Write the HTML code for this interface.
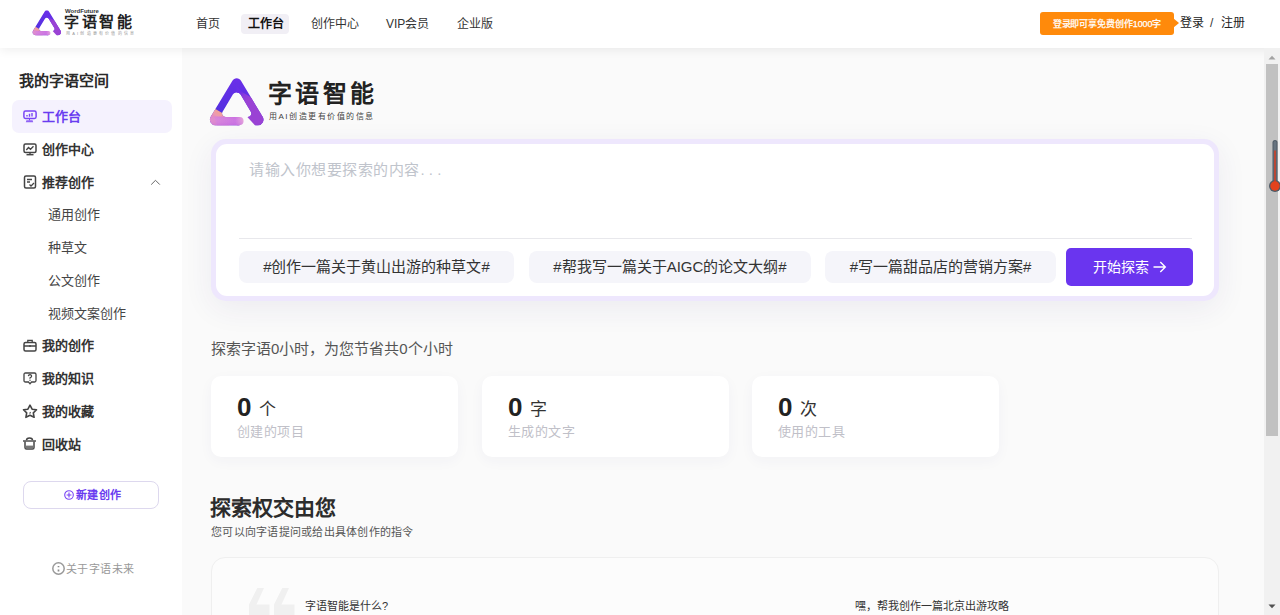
<!DOCTYPE html>
<html lang="zh-CN"><head><meta charset="utf-8">
<style>
*{margin:0;padding:0;box-sizing:border-box}
html,body{width:1280px;height:615px;overflow:hidden;background:#fafafa;font-family:"Liberation Sans",sans-serif;color:#333}
.abs{position:absolute}
#header{position:absolute;left:0;top:0;width:1280px;height:48px;background:#fff;z-index:5;box-shadow:0 2px 10px rgba(0,0,0,0.07)}
#side{position:absolute;left:0;top:48px;width:182px;height:567px;background:#fff;z-index:2}
.nav{position:absolute;top:14px;height:20px;line-height:20px;font-size:12px;color:#333;white-space:nowrap}
.nav.act{background:#f1eff5;border-radius:4px;font-weight:bold;color:#111;padding:0 0 0 7px;width:48px}
.mi{position:absolute;left:12px;width:159px;height:33px;line-height:33px;font-size:13px;font-weight:bold;color:#333;white-space:nowrap}
.mi .ic{position:absolute;left:11px;top:10px}
.mi .tx{position:absolute;left:30px;top:0}
.mi.act{background:#f5f2fe;border-radius:7px;color:#6a3cf0;width:160px}
.sub{position:absolute;left:48px;height:33px;line-height:33px;font-size:13px;color:#444;white-space:nowrap}
.tag{position:absolute;top:251px;height:32px;background:#f5f5fa;border-radius:8px;font-size:15px;line-height:32px;text-align:center;color:#333;white-space:nowrap}
.card{position:absolute;top:376px;width:247px;height:81px;background:#fff;border-radius:10px;box-shadow:0 4px 14px rgba(60,40,120,0.04)}
.card .num{position:absolute;left:26px;top:16px;font-size:26px;font-weight:bold;color:#222;line-height:30px}
.card .unit{position:absolute;left:48px;top:22px;font-size:17px;color:#333;line-height:24px}
.card .lbl{position:absolute;left:26px;top:47px;letter-spacing:0.4px;font-size:13px;color:#c0c0c8;line-height:18px;white-space:nowrap}
#scroll{position:absolute;left:1264px;top:48px;width:16px;height:567px;background:#f1f1f1;z-index:6}
</style></head><body>
<svg width="0" height="0" style="position:absolute">
<defs>
  <linearGradient id="lgV" gradientUnits="userSpaceOnUse" x1="0" y1="5" x2="0" y2="40"><stop offset="0" stop-color="#6c2ee9"/><stop offset="1" stop-color="#5331e0"/></linearGradient>
  <linearGradient id="lgS" gradientUnits="userSpaceOnUse" x1="17" y1="35" x2="8" y2="46"><stop offset="0" stop-color="#4e2fd8"/><stop offset="0.22" stop-color="#f3a58a"/><stop offset="0.7" stop-color="#ec9ab0"/><stop offset="1" stop-color="#de84c8"/></linearGradient>
  <linearGradient id="lgB" gradientUnits="userSpaceOnUse" x1="4" y1="0" x2="39" y2="0"><stop offset="0" stop-color="#dd86cc"/><stop offset="0.3" stop-color="#d47ad8"/><stop offset="0.75" stop-color="#c96be0"/><stop offset="1" stop-color="#e7a3d6"/></linearGradient>
  <linearGradient id="lgBv" gradientUnits="userSpaceOnUse" x1="0" y1="44" x2="0" y2="54"><stop offset="0" stop-color="#ffffff" stop-opacity="0"/><stop offset="1" stop-color="#b860e0" stop-opacity="0.35"/></linearGradient>
  <linearGradient id="lgR" gradientUnits="userSpaceOnUse" x1="36" y1="19" x2="43" y2="28"><stop offset="0" stop-color="#6a2ee8"/><stop offset="0.45" stop-color="#8a3bdc"/><stop offset="1" stop-color="#9a42d4"/></linearGradient>
  <clipPath id="lgClip"><path clip-rule="evenodd" d="M27.41 8.74 A5.00 5.00 0 0 1 35.99 8.74 L57.67 44.87 A5.50 5.50 0 0 1 52.95 53.20 L10.45 53.20 A5.50 5.50 0 0 1 5.73 44.87 Z M27.84 22.62 A4.50 4.50 0 0 1 35.56 22.62 L45.81 39.70 A3.50 3.50 0 0 1 42.81 45.00 L20.59 45.00 A3.50 3.50 0 0 1 17.59 39.70 Z"/></clipPath>
  <mask id="lgMask" maskUnits="userSpaceOnUse" x="0" y="0" width="64" height="60"><rect width="64" height="60" fill="#fff"/><path d="M34.5 43.5H41L51.5 55H34.5Z" fill="#000"/><circle cx="34.5" cy="49.1" r="4.1" fill="#fff"/></mask>
  <symbol id="logo" viewBox="0 0 64 60">
    <g mask="url(#lgMask)"><g clip-path="url(#lgClip)">
      <rect width="64" height="60" fill="url(#lgV)"/>
      <path d="M31.7 14 L37 20 L64 36 V60 H31.7 Z" fill="url(#lgR)"/>
      <path d="M0 31 L24 45 L24 60 H0 Z" fill="url(#lgS)"/>
      <path d="M9 44.6 H40 V60 H14 Z" fill="url(#lgB)"/>
      <path d="M0 44 H40 V60 H0 Z" fill="url(#lgBv)"/>
    </g></g>
  </symbol>
</defs></svg>

<div id="header">
  <!-- logo -->
  <svg class="abs" style="left:30.3px;top:6.5px" width="34" height="31.9" viewBox="0 0 64 60"><use href="#logo"/></svg>
  <div class="abs" style="left:65px;top:8px;font-size:6px;font-weight:bold;color:#333;line-height:6px">WordFuture</div>
  <div class="abs" style="left:64px;top:13px;font-size:15px;font-weight:bold;color:#222;line-height:18px;letter-spacing:2.6px;white-space:nowrap">字语智能</div>
  <div class="abs" style="left:66px;top:31px;font-size:4px;color:#999;line-height:5px;letter-spacing:2.2px">用AI创造更有价值的信息</div>

  <div class="nav" style="left:196px">首页</div>
  <div class="nav act" style="left:241px">工作台</div>
  <div class="nav" style="left:311px">创作中心</div>
  <div class="nav" style="left:386px">VIP会员</div>
  <div class="nav" style="left:457px">企业版</div>

  <div class="abs" style="left:1040px;top:12px;width:134px;height:23px;background:#ff8a0b;border-radius:3px;color:#fff;font-size:9px;line-height:25px;text-align:center;font-weight:normal;-webkit-text-stroke:0.25px #fff;letter-spacing:-0.1px">登录即可享免费创作1000字</div>
  <div class="abs" style="left:1173px;top:18px;width:0;height:0;border-top:5.5px solid transparent;border-bottom:5.5px solid transparent;border-left:6px solid #ff8a0b"></div>
  <div class="abs" style="left:1180px;top:13px;font-size:12px;line-height:20px;color:#222;white-space:nowrap">登录</div><div class="abs" style="left:1210px;top:13px;font-size:12px;line-height:20px;color:#333">/</div><div class="abs" style="left:1221px;top:13px;font-size:12px;line-height:20px;color:#222;white-space:nowrap">注册</div>
</div>

<div id="side">
  <div class="abs" style="left:19px;top:23px;font-size:15px;font-weight:bold;color:#2a2a2a;line-height:20px">我的字语空间</div>
  <div class="mi act" style="top:52px"><svg class="ic" style="left:11px;top:10px" width="14" height="13" viewBox="0 0 14 13"><rect x="0.9" y="1.1" width="12.2" height="7.3" rx="1.6" fill="none" stroke="#7a45f5" stroke-width="1.5"/><path d="M4 6.5V5M6.5 6.8V3.8M9 6.5V3" stroke="#7a45f5" stroke-width="1.4" fill="none"/><path d="M6.5 8.5V10.5" stroke="#7a45f5" stroke-width="1"/><path d="M2.8 12.3H10.2L9.6 10.2H3.4Z" fill="#8f62f5"/></svg><span class="tx">工作台</span></div>
  <div class="mi" style="top:85px"><svg class="ic" style="left:11px;top:10px" width="14" height="13" viewBox="0 0 14 13"><rect x="1" y="1" width="12" height="8.5" rx="1.5" fill="none" stroke="#444" stroke-width="1.5"/><path d="M3.3 7L5.5 4.5L7.5 6.3L10.5 3.3" stroke="#444" stroke-width="1.3" fill="none"/><rect x="6.3" y="9.3" width="1.4" height="2" fill="#444"/><rect x="3.5" y="11" width="7" height="1.4" fill="#444"/></svg><span class="tx">创作中心</span></div>
  <div class="mi" style="top:118px"><svg class="ic" style="left:11px;top:9px" width="14" height="14" viewBox="0 0 14 14"><rect x="1.5" y="1" width="11" height="12" rx="1.5" fill="none" stroke="#444" stroke-width="1.5"/><path d="M4 4.5H9M4 7H7M6.5 9.5L8 11L11 8" stroke="#444" stroke-width="1.3" fill="none"/></svg><span class="tx">推荐创作</span><svg class="abs" style="left:138px;top:12.5px" width="11" height="7" viewBox="0 0 11 7"><path d="M1.2 5.6L5.5 1.3L9.8 5.6" fill="none" stroke="#666" stroke-width="1"/></svg></div>
  <div class="sub" style="top:150px">通用创作</div>
  <div class="sub" style="top:183px">种草文</div>
  <div class="sub" style="top:216px">公文创作</div>
  <div class="sub" style="top:249px">视频文案创作</div>
  <div class="mi" style="top:281px"><svg class="ic" style="left:11px;top:10px" width="14" height="13" viewBox="0 0 14 13"><rect x="1" y="3.5" width="12" height="8.5" rx="1.5" fill="none" stroke="#444" stroke-width="1.5"/><path d="M4.8 3.5V1.3H9.2V3.5M1 7H13M7 6V8" stroke="#444" stroke-width="1.3" fill="none"/></svg><span class="tx">我的创作</span></div>
  <div class="mi" style="top:314px"><svg class="ic" style="left:11px;top:10px" width="14" height="13" viewBox="0 0 14 13"><path d="M2.5 1H11.5Q13 1 13 2.5V8.5Q13 10 11.5 10H8.5L7 11.8L5.5 10H2.5Q1 10 1 8.5V2.5Q1 1 2.5 1Z" fill="none" stroke="#444" stroke-width="1.3"/><path d="M5.3 4.2Q5.5 2.7 7 2.7Q8.7 2.8 8.6 4.2Q8.5 5.2 7 5.8V6.8" stroke="#444" stroke-width="1.2" fill="none"/><circle cx="7" cy="8.3" r="0.7" fill="#444"/></svg><span class="tx">我的知识</span></div>
  <div class="mi" style="top:347px"><svg class="ic" style="left:10px;top:9px" width="16" height="16" viewBox="0 0 16 16"><path d="M8 1.2L10.1 5.2L14.5 5.8L11.3 8.9L12.1 13.3L8 11.2L3.9 13.3L4.7 8.9L1.5 5.8L5.9 5.2Z" fill="none" stroke="#444" stroke-width="1.6" stroke-linejoin="round"/><path d="M8.6 8.2L7.6 9.6" stroke="#555" stroke-width="1.2"/></svg><span class="tx">我的收藏</span></div>
  <div class="mi" style="top:380px"><svg class="ic" style="left:10px;top:9px" width="15" height="13" viewBox="0 0 15 13"><path d="M4.5 3.3Q4.5 1 7.5 1Q10.5 1 10.5 3.3" fill="none" stroke="#444" stroke-width="1.5"/><path d="M1 4H14" stroke="#444" stroke-width="1.4"/><path d="M3 4.5V10.5Q3 12 4.5 12H10.5Q12 12 12 10.5V4.5" fill="none" stroke="#444" stroke-width="1.5"/><path d="M3.5 8.6H11.5V11.3H3.5Z" fill="#777"/></svg><span class="tx">回收站</span></div>
  <div class="abs" style="left:23px;top:433px;width:136px;height:28px;border:1px solid #ddd8ee;border-radius:8px"></div><svg class="abs" style="left:63.5px;top:442px" width="10" height="10" viewBox="0 0 10 10"><circle cx="5" cy="5" r="4.3" fill="none" stroke="#7a45f5" stroke-width="1.1"/><path d="M5 2.6V7.4M2.6 5H7.4" stroke="#7a45f5" stroke-width="1.1"/></svg><div class="abs" style="left:76px;top:439px;font-size:11px;letter-spacing:0.3px;font-weight:bold;color:#6a3cf0;line-height:16px;white-space:nowrap">新建创作</div>
  <svg class="abs" style="left:51.5px;top:514px" width="13" height="13" viewBox="0 0 13 13"><circle cx="6.5" cy="6.5" r="5.7" fill="none" stroke="#9a9a9a" stroke-width="1.5"/><path d="M6.5 4V5.3M6.5 7.5V9.6" stroke="#8a8a8a" stroke-width="1.7"/></svg><div class="abs" style="left:66px;top:513px;font-size:11px;letter-spacing:0.4px;color:#999;line-height:16px;white-space:nowrap">关于字语未来</div>
</div>

<div id="main">
  <svg class="abs" style="left:205px;top:72px" width="64" height="60" viewBox="0 0 64 60"><use href="#logo"/></svg>
  <div class="abs" style="left:268px;top:79px;font-size:24px;font-weight:bold;color:#222;line-height:30px;letter-spacing:3.3px;white-space:nowrap">字语智能</div>
  <div class="abs" style="left:269px;top:112px;font-size:8px;color:#444;line-height:10px;letter-spacing:1.5px;white-space:nowrap">用AI创造更有价值的信息</div>

  <div class="abs" style="left:211px;top:139px;width:1008px;height:162px;background:#eee7fd;border-radius:15px;box-shadow:0 8px 30px rgba(60,40,120,0.07)"></div>
  <div class="abs" style="left:216px;top:144px;width:998px;height:152px;background:#fff;border-radius:11px"></div>
  <div class="abs" style="left:249px;top:159px;font-size:15px;color:#c0c4cc;line-height:22px;letter-spacing:0.5px;white-space:nowrap">请输入你想要探索的内容<span style="letter-spacing:4.2px;margin-left:1px">...</span></div>
  <div class="abs" style="left:239px;top:238px;width:953px;height:1px;background:#e8e8ec"></div>
  <div class="tag" style="left:239px;width:275px">#创作一篇关于黄山出游的种草文#</div>
  <div class="tag" style="left:529px;width:282px">#帮我写一篇关于AIGC的论文大纲#</div>
  <div class="tag" style="left:825px;width:231px">#写一篇甜品店的营销方案#</div>
  <div class="abs" style="left:1066px;top:248px;width:127px;height:38px;background:#6a35ef;border-radius:5px;color:#fff;font-size:14px;line-height:38px;text-align:center;white-space:nowrap">开始探索<svg style="vertical-align:-2px;margin-left:4px" width="14" height="14" viewBox="0 0 14 14"><path d="M0.5 7H12.3M7.3 2L12.3 7L7.3 12" fill="none" stroke="#fff" stroke-width="1.4"/></svg></div>

  <div class="abs" style="left:211px;top:339px;font-size:15px;color:#555;line-height:20px;white-space:nowrap">探索字语0小时，为您节省共0个小时</div>
  <div class="card" style="left:211px"><span class="num">0</span><span class="unit">个</span><div class="lbl">创建的项目</div></div>
  <div class="card" style="left:482px"><span class="num">0</span><span class="unit">字</span><div class="lbl">生成的文字</div></div>
  <div class="card" style="left:752px"><span class="num">0</span><span class="unit">次</span><div class="lbl">使用的工具</div></div>

  <div class="abs" style="left:210px;top:494px;font-size:21px;font-weight:bold;color:#2c2c2c;line-height:28px;white-space:nowrap">探索权交由您</div>
  <div class="abs" style="left:211px;top:524px;font-size:11px;letter-spacing:0.25px;color:#555;line-height:16px;white-space:nowrap">您可以向字语提问或给出具体创作的指令</div>
  <div class="abs" style="left:211px;top:557px;width:1008px;height:100px;background:#fcfcfc;border:1px solid #efefef;border-radius:14px"></div>
  <svg class="abs" style="left:0;top:0" width="1280" height="615"><path d="M257.3 588H264L256.5 604.4H269.5V620H249V604.4Z" fill="#f0f0f0"/><path d="M282.3 588H289L281.5 604.4H294.5V620H274V604.4Z" fill="#f0f0f0"/></svg>
  <div class="abs" style="left:305px;top:598px;font-size:11px;color:#333;line-height:16px;white-space:nowrap">字语智能是什么?</div>
  <div class="abs" style="left:855px;top:598px;font-size:11px;color:#333;line-height:16px;white-space:nowrap">嘿，帮我创作一篇北京出游攻略</div>
</div>

<div id="scroll">
  <svg class="abs" style="left:4px;top:7px" width="8" height="5" viewBox="0 0 8 5"><path d="M0.5 4.5L4 0.8L7.5 4.5Z" fill="#a3a3a3"/></svg>
  <div class="abs" style="left:2px;top:16px;width:12px;height:372px;background:#c1c1c1"></div>
  <svg class="abs" style="left:4px;top:556px" width="8" height="5" viewBox="0 0 8 5"><path d="M0.5 0.5H7.5L4 4.2Z" fill="#505050"/></svg>
  <svg class="abs" style="left:2.7px;top:91px" width="13" height="54" viewBox="0 0 13 54">
    <rect x="5.5" y="1" width="5" height="44" rx="2.5" fill="#4e5b67"/>
    <rect x="6.5" y="2" width="3" height="42" rx="1.5" fill="#66737f"/>
    <circle cx="8" cy="47" r="6" fill="#4d5a66"/>
    <rect x="7.25" y="11.5" width="1.5" height="34" fill="#d43a1e"/>
    <circle cx="8" cy="47" r="4.7" fill="#e2421e"/>
  </svg>
</div>
</body></html>
